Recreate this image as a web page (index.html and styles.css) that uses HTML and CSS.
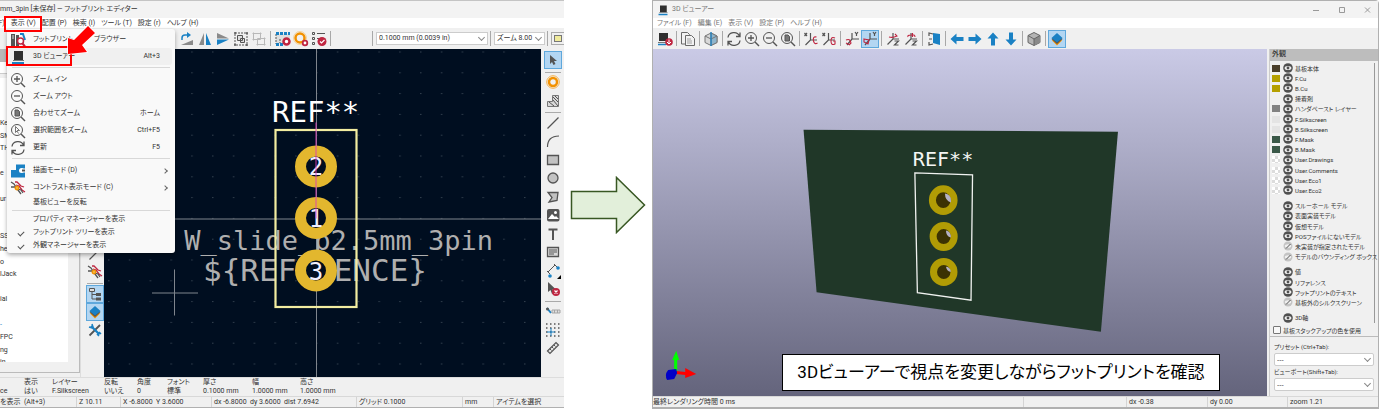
FILE: index.html
```html
<!DOCTYPE html>
<html lang="ja">
<head>
<meta charset="utf-8">
<title>フットプリント エディター / 3D ビューアー</title>
<link rel="stylesheet" href="styles.css">
</head>
<body>
<svg class="defs" aria-hidden="true">
  <defs>
    <symbol id="chip" viewBox="0 0 16 16"><path d="M4 2h9v9H4z" fill="#2f2f2f"/><path d="M3 11h11v1H3z" fill="#777"/><path d="M2 13h12v2H2z" fill="#1a81c4"/></symbol>
    <symbol id="library" viewBox="0 0 16 16"><path d="M1 2h4v12H1zM6 3h3v11H6z" fill="#545454"/><path d="M2 4h2M2 6h2" stroke="#ddd"/><path d="M10 2l3 0 2 6" fill="none" stroke="#1a81c4" stroke-width="2"/><circle cx="10.500" cy="9" r="3" fill="#fff" stroke="#bf2641" stroke-width="1.500"/><path d="M12.500 11.500l2.500 3" stroke="#bf2641" stroke-width="2"/></symbol>
    <symbol id="zoomin" viewBox="0 0 16 16" fill="none" stroke="#545454"><circle cx="7" cy="7" r="5.500"/><path d="M11 11l4 4" stroke-width="1.500"/><path d="M4 7h6M7 4v6" stroke-width="1.300"/></symbol>
    <symbol id="zoomout" viewBox="0 0 16 16" fill="none" stroke="#545454"><circle cx="7" cy="7" r="5.500"/><path d="M11 11l4 4" stroke-width="1.500"/><path d="M4 7h6" stroke-width="1.300"/></symbol>
    <symbol id="zoomfit" viewBox="0 0 16 16" fill="none" stroke="#545454"><circle cx="7" cy="7" r="5.500"/><path d="M11 11l4 4" stroke-width="1.500"/><path d="M5 4h3l1.500 1.500V10H5z" fill="#777"/></symbol>
    <symbol id="zoomsel" viewBox="0 0 16 16" fill="none" stroke="#545454"><circle cx="7" cy="7" r="5.500"/><path d="M11 11l4 4" stroke-width="1.500"/><path d="M5.500 3.500v6l1.500-1.500 1.500 2.500M5.500 3.500l4 4H7" stroke-width=".8"/></symbol>
    <symbol id="refresh" viewBox="0 0 16 16" fill="none" stroke="#545454" stroke-width="1.300"><path d="M2 6.500A6 5.500 0 0 1 13.500 5M14 9.500A6 5.500 0 0 1 2.500 11M14 1.500V5.500H10M2 14.500v-4h4"/></symbol>
    <symbol id="drawmode" viewBox="0 0 16 16"><path d="M6 1.500h9v4h-3a2 2 0 0 0 0 4h3v5H1V7h5z" fill="#1a81c4"/><circle cx="11.500" cy="7.500" r="2.500" fill="#fff"/><path d="M12 7.500h3" stroke="#545454" stroke-width="2"/></symbol>
    <symbol id="contrast" viewBox="0 0 16 16" fill="none" stroke-width="1.300"><path d="M5 2h2l4 4 3 1M6 5l3 1 3 4 3 2" stroke="#bf2641"/><path d="M1 2l3 2 2 3M1 7h4l3 3 3 4M8 9l3 1 2 3" stroke="#545454"/><circle cx="7" cy="8" r="1.800" fill="#f2b844" stroke="#f29100"/></symbol>
    <symbol id="rotate" viewBox="0 0 16 16"><path d="M2 14h12V9z" fill="#8a8a8a"/><path d="M3 9V7q0-3 3-3h4" fill="none" stroke="#1a81c4" stroke-width="1.500"/><path d="M8 1l4 3-4 3z" fill="#1a81c4"/></symbol>
    <symbol id="mirrorh" viewBox="0 0 16 16"><path d="M7 2v12H2z" fill="#8a8a8a"/><path d="M9 2v12h5z" fill="#1a81c4"/></symbol>
    <symbol id="mirrorv" viewBox="0 0 16 16"><path d="M2 2v5.500h12z" fill="#8a8a8a"/><path d="M2 14V8.500h12z" fill="#1a81c4"/></symbol>
    <symbol id="group" viewBox="0 0 16 16" fill="none" stroke="#545454"><path d="M2 2h12v12H2z" stroke-dasharray="2 1"/><path d="M1.500 1.500h1v1h-1zM13.500 1.500h1v1h-1zM1.500 13.500h1v1h-1zM13.500 13.500h1v1h-1z"/><path d="M4.500 4.500h5v5h-5zM7.500 7.500h4v4h-4z" fill="#ddd"/></symbol>
    <symbol id="ungroup" viewBox="0 0 16 16" fill="none" stroke="#b8b8b8"><path d="M2.500 2.500h7v6h-7zM6.500 7.500h7v6h-7z"/><path d="M2 2h1v1H2zM9 2h1v1H9zM2 8h1v1H2zM13 13h1v1h-1zM6 13h1v1H6zM13 7h1v1h-1z"/></symbol>
    <symbol id="fpprops" viewBox="0 0 16 16"><path d="M1 3h14v10H1z" fill="#dedede"/><path d="M1 3v10M5 8v4" stroke="#545454" stroke-dasharray="2 1"/><path d="M1 1h3v3H1zM5 1h3v3H5zM9 1h3v3H9zM13 1h2v3h-2zM1 12h3v3H1zM5 12h3v3H5z" fill="#1a81c4"/><circle cx="11.500" cy="10.500" r="3" fill="#fff" stroke="#bf2641" stroke-width="2.500"/></symbol>
    <symbol id="padprops" viewBox="0 0 16 16" fill="none"><circle cx="7" cy="7" r="4.500" stroke="#f29100" stroke-width="2.500"/><circle cx="7" cy="7" r="6.500" stroke="#f5c77c" stroke-width=".7"/><circle cx="12" cy="12" r="2.300" fill="#fff" stroke="#bf2641" stroke-width="1.800"/></symbol>
    <symbol id="check" viewBox="0 0 16 16"><path d="M1.500 1.500h2v2h-2zM1.500 6.500h2v2h-2zM1.500 11.500h2v2h-2z" fill="none" stroke="#545454"/><path d="M6 2.500h8M6 7.500h4" stroke="#545454"/><circle cx="11" cy="10.500" r="4.500" fill="#bf2641"/><path d="M9 10.500l1.500 1.500 3-3" fill="none" stroke="#fff" stroke-width="1.200"/></symbol>
    <symbol id="cursor" viewBox="0 0 16 16"><path d="M5 3v9l2-2L8.500 13l2-1-1.500-3H12z" fill="#545454"/></symbol>
    <symbol id="pad" viewBox="0 0 16 16" fill="none"><circle cx="8" cy="8" r="4" stroke="#f29100" stroke-width="2.500"/><circle cx="8" cy="8" r="6.300" stroke="#f5b04a"/></symbol>
    <symbol id="rule" viewBox="0 0 16 16"><path d="M7.500 2.500h6v11h-11v-5h5z" fill="#d8d8d8" stroke="#777"/><path d="M8 4l5 5M8 7l5 6M4 9l5 4M10 3l3 3" stroke="#545454"/></symbol>
    <symbol id="line" viewBox="0 0 16 16"><path d="M2.500 13.500l11-11" stroke="#545454" stroke-width="1.200"/></symbol>
    <symbol id="arc" viewBox="0 0 16 16"><path d="M2.500 14Q2.500 3 14 3" fill="none" stroke="#545454" stroke-width="1.200"/></symbol>
    <symbol id="rect" viewBox="0 0 16 16"><path d="M2.500 3.500h11v9h-11z" fill="#c2c2c2" stroke="#545454" stroke-width="1.300"/></symbol>
    <symbol id="circle" viewBox="0 0 16 16"><circle cx="8" cy="8" r="5" fill="#c2c2c2" stroke="#545454" stroke-width="1.300"/></symbol>
    <symbol id="poly" viewBox="0 0 16 16"><path d="M3 3.500h10l-1 8L4 13l3-4.500z" fill="#c2c2c2" stroke="#545454" stroke-width="1.300"/></symbol>
    <symbol id="image" viewBox="0 0 16 16"><rect x="2" y="2" width="12.500" height="12.500" rx="2" fill="#545454"/><circle cx="10.500" cy="5.500" r="1.500" fill="#fff"/><path d="M3 12l4-5 3 3 1-1 3 3z" fill="#fff"/></symbol>
    <symbol id="textt" viewBox="0 0 16 16"><path d="M3.500 3.500h9M8 3v11" stroke="#545454" stroke-width="2"/></symbol>
    <symbol id="textbox" viewBox="0 0 16 16"><path d="M2.500 3.500h11v9h-11z" fill="#d8d8d8" stroke="#545454" stroke-width="1.300"/><path d="M4 6h8M4 8h8M4 10h5" stroke="#545454"/></symbol>
    <symbol id="dimension" viewBox="0 0 16 16"><path d="M3 9l7-7M2 8l3 3M9 1l3 3" stroke="#545454"/><circle cx="13" cy="5" r="1.800" fill="#1a81c4"/><circle cx="5" cy="13" r="1.800" fill="#1a81c4"/><path d="M16 12v4h-4z" fill="#000"/></symbol>
    <symbol id="delete" viewBox="0 0 16 16"><path d="M3 1v10l2.500-2 1.500 4 2-1-1.500-3.500H11z" fill="#545454"/><circle cx="11" cy="11" r="4" fill="#bf2641"/><path d="M9.500 9.500l3 3M12.500 9.500l-3 3" stroke="#fff" stroke-width="1.200"/></symbol>
    <symbol id="anchor" viewBox="0 0 16 16"><path d="M2 5l4 5" stroke="#1a81c4" stroke-width="2"/><circle cx="2.500" cy="6" r="1.500" fill="#545454"/><path d="M7 7h8v3H7z" fill="#e0e0e0" stroke="#a5a5a5"/><path d="M9.500 7v3M12.500 7v3" stroke="#a5a5a5"/></symbol>
    <symbol id="griddots" viewBox="0 0 16 16"><path d="M1 2h15M1 6h15M1 10h15M1 14h15" stroke="#545454" stroke-width="1.500" stroke-dasharray="1.500 2.500"/><path d="M6 6v8M2 10h8" stroke="#1a81c4"/></symbol>
    <symbol id="measure" viewBox="0 0 16 16"><path d="M2.500 11L11 2.500l2.500 2.500L5 13.500z" fill="#e8e8e8" stroke="#545454" stroke-width="1.200"/><path d="M5 9l1.500 1.500M7 7l1.500 1.500M9 5l1.500 1.500" stroke="#545454"/></symbol>
    <symbol id="tree" viewBox="0 0 16 16"><path d="M2.500 2.500h5v3h-5z" fill="#ddd" stroke="#545454"/><path d="M5 5v8h5M5 8.500h5" fill="none" stroke="#545454"/><path d="M9 7h5v3H9zM9 11.500h5v3H9z" fill="#545454"/></symbol>
    <symbol id="layers" viewBox="0 0 16 16"><path d="M8 5l5 4.500L8 14.500 3 9.500z" fill="#f29100"/><path d="M8 3l5.500 5L8 13 2.500 8z" fill="#545454"/><path d="M8 2l5.500 5L8 11.500 2.500 7z" fill="#1a81c4"/></symbol>
    <symbol id="tools" viewBox="0 0 16 16"><path d="M2.500 13.500L13 3" stroke="#545454" stroke-width="1.800"/><path d="M4 4l8.500 8.500" stroke="#1a81c4" stroke-width="2.300"/><path d="M2 5l3 1 1-1-1-3M14 12l-1.500-1.500-2 2L12 14" fill="none" stroke="#1a81c4" stroke-width="1.500"/></symbol>
    <symbol id="export" viewBox="0 0 16 16"><path d="M2 2h9v8H2z" fill="#2f2f2f"/><path d="M1 11.500h10" stroke="#777"/><path d="M1 13.500h8" stroke="#1a81c4" stroke-width="1.500"/><circle cx="12" cy="11" r="3.800" fill="#bf2641"/><path d="M12 8.500v4M10 11l2 2 2-2" fill="none" stroke="#fff"/></symbol>
    <symbol id="copy" viewBox="0 0 16 16" fill="#f2f2f2" stroke="#6a6a6a"><path d="M1.500 1.500h6l2 2V13h-8z"/><path d="M5.500 4.500h6l3 3V14.500h-9z"/><path d="M7 8h4M7 10h5M7 12h5" stroke="#a0a0a0"/></symbol>
    <symbol id="cubehalf" viewBox="0 0 16 16"><path d="M8 2l6 3v6.500L8 14.500l-6-3V5z" fill="#d8d8d8" stroke="#777"/><path d="M8 2v12.500l6-3V5z" fill="#8fb5cc" stroke="#777"/><path d="M2 5l6 3 6-3" fill="none" stroke="#777"/><path d="M8 1v14" stroke="#1a81c4" stroke-width="1.300"/></symbol>
    <symbol id="cube" viewBox="0 0 16 16"><path d="M8 1.500l6 3v7l-6 3-6-3v-7z" fill="#b5b5b5" stroke="#666"/><path d="M8 8l6-3.500v7l-6 3z" fill="#8a8a8a"/><path d="M2 4.500L8 8l6-3.500M8 8v6.500" fill="none" stroke="#666"/></symbol>
    <symbol id="rotx1" viewBox="0 0 16 16" fill="none" stroke="#545454"><path d="M1.500 2l2.500 3M4 2L1.500 5M7.500 2v7l-5 5M7.500 9H14" stroke-width="1.200"/><path d="M13.500 6q-4-1-3 4 1 4 4 2" stroke="#bf2641" stroke-width="1.100"/></symbol>
    <symbol id="rotx2" viewBox="0 0 16 16" fill="none" stroke="#545454"><path d="M1.500 2l2.500 3M4 2L1.500 5M7.500 2v7l-5 5M7.500 9H14" stroke-width="1.200"/><path d="M14 7q-4-2-4 3t4 3v-3h-2" stroke="#bf2641" stroke-width="1.100"/></symbol>
    <symbol id="roty1" viewBox="0 0 16 16" fill="none" stroke="#545454"><path d="M11 1l1.500 2L14 1M12.500 3v2M8 2v6h7M8 8l-5 6" stroke-width="1.200"/><path d="M2 9q4-2 5 3l-2 2M2 12l4 2" stroke="#bf2641" stroke-width="1.100"/></symbol>
    <symbol id="roty2" viewBox="0 0 16 16" fill="none" stroke="#545454"><path d="M11 1l1.500 2L14 1M12.500 3v2M8 2v6h7M8 8l-5 6" stroke-width="1.200"/><path d="M2 8l5 1-1 4-4-2z" stroke="#bf2641" stroke-width="1.100"/></symbol>
    <symbol id="rotz1" viewBox="0 0 16 16" fill="none" stroke="#545454"><path d="M8 2v6l-5.500 5.500M8 8h6M9.500 10h4l-4 4h4" stroke-width="1.200"/><path d="M4 6q4 1 8-1l-2-2" stroke="#bf2641" stroke-width="1.100"/></symbol>
    <symbol id="rotz2" viewBox="0 0 16 16" fill="none" stroke="#545454"><path d="M8 2v6l-5.500 5.500M8 8h6M9.500 10h4l-4 4h4" stroke-width="1.200"/><path d="M12 6q0-3-4-2-4 0-3 2M9.500 2v4" stroke="#bf2641" stroke-width="1.100"/></symbol>
    <symbol id="flip" viewBox="0 0 16 16"><path d="M7 2l7 1v11l-7-2z" fill="#1a81c4"/><path d="M7 3L3 2v3M3 8h3M3 11v3l4-1" fill="none" stroke="#545454" stroke-width="1.200"/></symbol>
    <symbol id="arrow" viewBox="0 0 16 16"><path d="M1.500 8l6-5.500v3.500h7v4h-7v3.500z" fill="#1a81c4"/></symbol>
    <symbol id="eye" viewBox="0 0 10 10"><circle cx="5" cy="5" r="4.800" fill="#505050"/><ellipse cx="5" cy="5" rx="3.400" ry="2" fill="#f0f0f0"/><circle cx="5" cy="5" r="1.400" fill="#505050"/></symbol>
    <symbol id="noeye" viewBox="0 0 10 10"><circle cx="5" cy="5" r="4.500" fill="#c4c4c4"/><ellipse cx="5" cy="5" rx="3.200" ry="1.800" fill="#f0f0f0"/><path d="M3 7.500L7.500 3" stroke="#505050"/></symbol>
  </defs>
</svg>

<main class="page">
  <section class="window editor">
    <header class="titlebar">mm_3pin [未保存] — フットプリント エディター</header>
    <nav class="menubar editor-menus">
      <button>(F)</button><button>表示 (V)</button><button>配置 (P)</button><button>検索 (I)</button><button>ツール (T)</button><button>設定 (r)</button><button>ヘルプ (H)</button>
    </nav>
    <div class="toolbar editor-tools">
      <button class="tool" aria-label="回転"><svg><use href="#rotate"/></svg></button>
      <button class="tool" aria-label="左右反転"><svg><use href="#mirrorh"/></svg></button>
      <button class="tool" aria-label="上下反転"><svg><use href="#mirrorv"/></svg></button>
      <button class="tool" aria-label="グループ化"><svg><use href="#group"/></svg></button>
      <button class="tool" aria-label="グループ解除"><svg><use href="#ungroup"/></svg></button>
      <i class="sep"></i>
      <button class="tool" aria-label="フットプリントのプロパティ"><svg><use href="#fpprops"/></svg></button>
      <button class="tool" aria-label="パッドのプロパティ"><svg><use href="#padprops"/></svg></button>
      <button class="tool" aria-label="チェッカー"><svg><use href="#check"/></svg></button>
      <i class="sep"></i>
      <span class="spacer"></span>
      <i class="sep"></i>
      <span class="combo grid-combo"><select aria-label="グリッド"><option>0.1000 mm (0.0039 in)</option></select></span>
      <i class="sep"></i>
      <span class="combo zoom-combo"><select aria-label="ズーム"><option>ズーム 8.00</option></select></span>
      <i class="sep"></i>
      <button class="layer-color" aria-label="レイヤー"><i></i></button>
    </div>

    <div class="workspace">
      <aside class="tree-panel">
        <div class="tree-head"></div>
        <div class="tree-search"></div>
        <div class="tree-list">
          <ul>
            <li>Key</li><li>SM</li><li>TH</li><li></li><li>e</li><li></li><li>ur</li><li></li><li></li><li>SS</li><li>he</li><li>o</li><li>lJack</li><li></li><li>ial</li><li></li><li class="link">-</li><li>FPC</li><li>ng</li><li>in</li>
          </ul>
        </div>
      </aside>
      <div class="side-tools left-tools">
        <button class="tool" aria-label="図形"><svg><use href="#line"/></svg></button>
        <button class="tool" aria-label="コントラスト"><svg><use href="#contrast"/></svg></button>
        <i class="rule"></i>
        <button class="tool on" aria-label="ツリー"><svg><use href="#tree"/></svg></button>
        <button class="tool on" aria-label="外観"><svg><use href="#layers"/></svg></button>
        <button class="tool" aria-label="ツール"><svg><use href="#tools"/></svg></button>
      </div>
      <svg class="canvas" viewBox="0 0 437 329" preserveAspectRatio="xMidYMid slice">
        <defs><pattern id="dots" x="4" y="3" width="20.800" height="20.800" patternUnits="userSpaceOnUse"><path d="M0 .5h1.500" stroke="#34414f"/></pattern></defs>
        <rect width="437" height="329" fill="#000e20"/>
        <rect width="437" height="329" fill="url(#dots)"/>
        <path d="M212.500 0v329M0 170.500h437" stroke="#7f858d"/>
        <path d="M70.500 221v46M48 244.500h46" stroke="#7f858d"/>
        <g class="mono" fill="#afafaf">
          <text x="389" y="201" font-size="27" text-anchor="end">W_slide_p2.5mm_3pin</text>
          <text x="99" y="232" font-size="31">${REFERENCE}</text>
        </g>
        <g fill="#000e20" stroke="#e3b72e" stroke-width="11">
          <circle cx="212" cy="118" r="15.500"/><circle cx="212" cy="169.500" r="15.500"/><circle cx="212" cy="222" r="15.500"/>
        </g>
        <rect x="171.500" y="81.500" width="81" height="177" fill="none" stroke="#f2eda1" stroke-width="2.200"/>
        <text class="mono" x="168" y="73" font-size="29" fill="#fff">REF**</text>
        <g class="mono" fill="#f0f0ff" font-size="24" text-anchor="middle">
          <text x="212" y="126">2</text><text x="212" y="178">1</text><text x="212" y="231">3</text>
        </g>
        <path d="M212 74v96" stroke="#e040b8" stroke-width="1.500" opacity=".6"/>
      </svg>
      <div class="side-tools right-tools">
        <button class="tool on" aria-label="選択"><svg><use href="#cursor"/></svg></button>
        <i class="rule"></i>
        <button class="tool" aria-label="パッド"><svg><use href="#pad"/></svg></button>
        <button class="tool" aria-label="ルールエリア"><svg><use href="#rule"/></svg></button>
        <i class="rule"></i>
        <button class="tool" aria-label="線"><svg><use href="#line"/></svg></button>
        <button class="tool" aria-label="円弧"><svg><use href="#arc"/></svg></button>
        <button class="tool" aria-label="矩形"><svg><use href="#rect"/></svg></button>
        <button class="tool" aria-label="円"><svg><use href="#circle"/></svg></button>
        <button class="tool" aria-label="ポリゴン"><svg><use href="#poly"/></svg></button>
        <button class="tool" aria-label="画像"><svg><use href="#image"/></svg></button>
        <button class="tool" aria-label="テキスト"><svg><use href="#textt"/></svg></button>
        <button class="tool" aria-label="テキストボックス"><svg><use href="#textbox"/></svg></button>
        <button class="tool" aria-label="寸法線"><svg><use href="#dimension"/></svg></button>
        <button class="tool" aria-label="削除"><svg><use href="#delete"/></svg></button>
        <i class="rule"></i>
        <button class="tool" aria-label="アンカー"><svg><use href="#anchor"/></svg></button>
        <button class="tool" aria-label="グリッド原点"><svg><use href="#griddots"/></svg></button>
        <button class="tool" aria-label="計測"><svg><use href="#measure"/></svg></button>
      </div>
    </div>

    <dl class="info">
      <div><dt>&nbsp;</dt><dd>ce</dd></div>
      <div><dt>表示</dt><dd>はい</dd></div>
      <div><dt>レイヤー</dt><dd>F.Silkscreen</dd></div>
      <div><dt>反転</dt><dd>いいえ</dd></div>
      <div><dt>角度</dt><dd>0</dd></div>
      <div><dt>フォント</dt><dd>標準</dd></div>
      <div><dt>厚さ</dt><dd>0.1000 mm</dd></div>
      <div><dt>幅</dt><dd>1.0000 mm</dd></div>
      <div><dt>高さ</dt><dd>1.0000 mm</dd></div>
    </dl>
    <footer class="status editor-status">
      <span>を表示&nbsp; (Alt+3)</span><span>Z 10.11</span><span>X -6.8000&nbsp; Y 3.6000</span><span>dx -6.8000&nbsp; dy 3.6000&nbsp; dist 7.6942</span><span>グリッド 0.1000</span><span>mm</span><span>アイテムを選択</span>
    </footer>

    <div class="menu" role="menu">
      <button class="item browser"><svg><use href="#library"/></svg><span>フットプリント</span><span>ブラウザー</span></button>
      <button class="item hover"><svg><use href="#chip"/></svg><span>3D ビューアー</span><kbd>Alt+3</kbd></button>
      <hr>
      <button class="item"><svg><use href="#zoomin"/></svg><span>ズーム イン</span></button>
      <button class="item"><svg><use href="#zoomout"/></svg><span>ズーム アウト</span></button>
      <button class="item"><svg><use href="#zoomfit"/></svg><span>合わせてズーム</span><kbd>ホーム</kbd></button>
      <button class="item"><svg><use href="#zoomsel"/></svg><span>選択範囲をズーム</span><kbd>Ctrl+F5</kbd></button>
      <button class="item"><svg><use href="#refresh"/></svg><span>更新</span><kbd>F5</kbd></button>
      <hr>
      <button class="item"><svg><use href="#drawmode"/></svg><span>描画モード (D)</span><b class="chev"></b></button>
      <button class="item"><svg><use href="#contrast"/></svg><span>コントラスト表示モード (C)</span><b class="chev"></b></button>
      <button class="item short"><i class="mark"></i><span>基板ビューを反転</span></button>
      <hr class="tight">
      <button class="item short"><i class="mark"></i><span>プロパティ マネージャーを表示</span></button>
      <button class="item short"><i class="mark ticked"></i><span>フットプリント ツリーを表示</span></button>
      <button class="item short"><i class="mark ticked"></i><span>外観マネージャーを表示</span></button>
    </div>
    <div class="callout callout-menu"></div>
    <div class="callout callout-item"></div>
    <svg class="pointer" viewBox="0 0 32 32"><path d="M22 1L29 8 16 20 21 27 2 29 2 13 8 15z" fill="#f00" stroke="#fff" stroke-width="1.500" paint-order="stroke"/></svg>
  </section>

  <div class="between">
    <svg viewBox="0 0 76 58"><path d="M1.500 15.500h45V1.500L74.500 29 46.500 56.500V42.500h-45z" fill="#e2efda" stroke="#385723" stroke-width="1.500"/></svg>
  </div>

  <section class="window viewer">
    <header class="titlebar viewer-title"><svg><use href="#chip"/></svg><span>3D ビューアー</span>
      <svg class="controls" viewBox="0 0 60 10" fill="none" stroke="#999"><path d="M1 5.500h6M27.500 2.500h5v5h-5zM53 2.500l5 5M58 2.500l-5 5"/></svg>
    </header>
    <nav class="menubar viewer-menus"><button>ファイル (F)</button><button>編集 (E)</button><button>表示 (V)</button><button>設定 (P)</button><button>ヘルプ (H)</button></nav>
    <div class="toolbar viewer-tools">
      <button class="tool" aria-label="再読込"><svg><use href="#export"/></svg></button><i class="sep"></i>
      <button class="tool" aria-label="コピー"><svg><use href="#copy"/></svg></button><i class="sep"></i>
      <button class="tool" aria-label="レイトレーシング"><svg><use href="#cubehalf"/></svg></button><i class="sep"></i>
      <button class="tool" aria-label="更新"><svg><use href="#refresh"/></svg></button>
      <button class="tool" aria-label="ズームイン"><svg><use href="#zoomin"/></svg></button>
      <button class="tool" aria-label="ズームアウト"><svg><use href="#zoomout"/></svg></button>
      <button class="tool" aria-label="合わせてズーム"><svg><use href="#zoomfit"/></svg></button><i class="sep"></i>
      <button class="tool" aria-label="X回転"><svg><use href="#rotx1"/></svg></button>
      <button class="tool" aria-label="X逆回転"><svg><use href="#rotx2"/></svg></button><i class="sep"></i>
      <button class="tool" aria-label="Y回転"><svg><use href="#roty1"/></svg></button>
      <button class="tool on" aria-label="Y逆回転"><svg><use href="#roty2"/></svg></button><i class="sep"></i>
      <button class="tool" aria-label="Z回転"><svg><use href="#rotz1"/></svg></button>
      <button class="tool" aria-label="Z逆回転"><svg><use href="#rotz2"/></svg></button><i class="sep"></i>
      <button class="tool" aria-label="反転"><svg><use href="#flip"/></svg></button><i class="sep"></i>
      <button class="tool" aria-label="左"><svg><use href="#arrow"/></svg></button>
      <button class="tool right" aria-label="右"><svg><use href="#arrow"/></svg></button>
      <button class="tool up" aria-label="上"><svg><use href="#arrow"/></svg></button>
      <button class="tool down" aria-label="下"><svg><use href="#arrow"/></svg></button><i class="sep"></i>
      <button class="tool" aria-label="投影"><svg><use href="#cube"/></svg></button><i class="sep"></i>
      <button class="tool on" aria-label="外観"><svg><use href="#layers"/></svg></button>
    </div>
    <div class="workspace">
      <div class="stage">
        <svg class="scene" viewBox="0 0 614 346" preserveAspectRatio="xMidYMid slice">
          <path d="M151 80.500L464.500 82.500 447.500 282 164 242.500z" fill="#203728"/>
          <path d="M262 123.500L319.500 125.500 318 250.500 264.500 243z" fill="none" stroke="#f0f2f0" stroke-width="1.300"/>
          <text class="mono" x="260" y="117" font-size="20" fill="#f4f6f4">REF**</text>
          <g fill="#3b3203" stroke="#b19c05" stroke-width="7">
            <ellipse cx="290.300" cy="150.700" rx="10.800" ry="11.300"/><ellipse cx="290.700" cy="187" rx="10.500" ry="11"/><ellipse cx="290.800" cy="222.300" rx="10.200" ry="10.500"/>
          </g>
          <path d="M292 144q6 1 6 7v2q-6-2-6-9zM293 181q5 1 5 7-5-1-5-7zM293 217q4 0 5 5-4 0-5-5z" fill="#b4b0c4"/>
          <path d="M22 324v-14h-2l4-9 3 9h-2v14z" fill="#0f0"/>
          <path d="M24 321l9 1v-4l11 6-11 4v-3l-9-1z" fill="#f00"/>
          <path d="M16 320l8-1 1 4-3 6-7 1q-3-5 1-10z" fill="#0000c8"/>
        </svg>
        <p class="caption">3Dビューアーで視点を変更しながらフットプリントを確認</p>
      </div>
      <aside class="appearance">
        <h2>外観</h2>
        <ul class="layers">
          <li><i class="sw brown"></i><svg><use href="#eye"/></svg>基板本体</li>
          <li><i class="sw copper"></i><svg><use href="#eye"/></svg>F.Cu</li>
          <li><i class="sw copper"></i><svg><use href="#eye"/></svg>B.Cu</li>
          <li><i class="sw"></i><svg><use href="#eye"/></svg>接着剤</li>
          <li><i class="sw paste"></i><svg><use href="#eye"/></svg>ハンダペースト レイヤー</li>
          <li><i class="sw silk"></i><svg><use href="#eye"/></svg>F.Silkscreen</li>
          <li><i class="sw silk"></i><svg><use href="#eye"/></svg>B.Silkscreen</li>
          <li><i class="sw mask"></i><svg><use href="#eye"/></svg>F.Mask</li>
          <li><i class="sw mask"></i><svg><use href="#eye"/></svg>B.Mask</li>
          <li><i class="sw clear"></i><svg><use href="#eye"/></svg>User.Drawings</li>
          <li><i class="sw clear"></i><svg><use href="#eye"/></svg>User.Comments</li>
          <li><i class="sw clear"></i><svg><use href="#eye"/></svg>User.Eco1</li>
          <li><i class="sw clear"></i><svg><use href="#eye"/></svg>User.Eco2</li>
          <li class="first"><i class="sw"></i><svg><use href="#eye"/></svg>スルーホール モデル</li>
          <li><i class="sw"></i><svg><use href="#eye"/></svg>表面実装モデル</li>
          <li><i class="sw"></i><svg><use href="#eye"/></svg>仮想モデル</li>
          <li><i class="sw"></i><svg><use href="#eye"/></svg>POSファイルにないモデル</li>
          <li><i class="sw"></i><svg><use href="#noeye"/></svg>未実装が指定されたモデル</li>
          <li><i class="sw"></i><svg><use href="#noeye"/></svg>モデルのバウンディング ボックス</li>
          <li class="first"><i class="sw"></i><svg><use href="#eye"/></svg>値</li>
          <li><i class="sw"></i><svg><use href="#eye"/></svg>リファレンス</li>
          <li><i class="sw"></i><svg><use href="#eye"/></svg>フットプリントのテキスト</li>
          <li><i class="sw"></i><svg><use href="#noeye"/></svg>基板外のシルクスクリーン</li>
          <li class="first"><i class="sw"></i><svg><use href="#eye"/></svg>3D軸</li>
        </ul>
        <label class="stackup"><input type="checkbox">基板スタックアップの色を使用</label>
        <div class="presets">
          <label for="preset">プリセット (Ctrl+Tab):</label>
          <span class="combo"><select id="preset"><option>---</option></select></span>
          <label for="viewport">ビューポート(Shift+Tab):</label>
          <span class="combo"><select id="viewport"><option>---</option></select></span>
        </div>
      </aside>
    </div>
    <footer class="status viewer-status"><span>最終レンダリング時間 0 ms</span><span></span><span>dx -0.38</span><span>dy 0.00</span><span>zoom 1.21</span></footer>
  </section>
</main>
</body>
</html>
```
FILE: styles.css
```css
* { box-sizing: border-box; }

body {
  margin: 0;
  background: #fff;
  color: #333;
  font-family: Roboto, "Noto Sans CJK JP", sans-serif;
  font-size: 7px;
  line-height: 9px;
  font-feature-settings: "palt";
  overflow: hidden;
}

button, select, kbd {
  font: inherit;
  font-feature-settings: inherit;
  color: inherit;
  padding: 0;
  border: 0;
  background: none;
}

ul, dl, dd, h2, p { margin: 0; padding: 0; }
ul { list-style: none; }
.defs { position: absolute; width: 0; height: 0; }
.mono { font-family: "DejaVu Sans Mono", monospace; }

.page {
  display: grid;
  grid-template-columns: 564fr 88fr 727fr;
  height: 100vh;
  min-height: 400px;
}

.window {
  position: relative;
  display: flex;
  flex-direction: column;
  min-width: 0;
  background: #f0f0f0;
  border-top: 1px solid #c4c4c4;
  white-space: nowrap;
}
.editor { margin-bottom: 1px; border-bottom: 1px solid #b0b0b0; overflow: hidden; }
.viewer { border: 1px solid #b0b0b0; border-bottom-width: 2px; border-radius: 0 4px 0 0; }
.between { display: flex; align-items: center; justify-content: center; }
.between svg { width: 76px; height: 58px; }

.titlebar { flex: none; height: 17px; line-height: 17px; background: #f3f3f3; }
.viewer-title { display: flex; align-items: center; gap: 3px; padding: 0 6px 0 4px; color: #777; }
.viewer-title svg { width: 12px; height: 12px; }
.viewer-title .controls { width: 60px; margin-left: auto; }

.menubar { flex: none; display: flex; height: 10px; background: #fff; line-height: 10px; }
.editor-menus { gap: 6px; margin-left: -4px; }
.viewer-menus { gap: 6px; padding-left: 4px; color: #777; }

.toolbar { flex: none; display: flex; align-items: center; height: 21px; }
.editor-tools { padding-left: 178px; }
.viewer-tools { padding-left: 3px; }
.tool {
  flex: none;
  display: flex;
  align-items: center;
  justify-content: center;
  width: 18px;
  height: 18px;
}
.tool svg { flex: none; width: 16px; height: 16px; }
.tool.on { background: #b3d6f2; border: 1px solid #5fa8dc; }
.tool.right svg { transform: rotate(180deg); }
.tool.up svg { transform: rotate(90deg); }
.tool.down svg { transform: rotate(-90deg); }
.sep { flex: none; width: 1px; height: 15px; margin: 0 2px; background: #a8a8a8; }
.editor-tools .sep { margin: 0 3px 0 2px; }
.spacer { flex: 1; }

.combo { position: relative; display: flex; height: 13px; background: #fff; border: 1px solid #ccc; }
.combo select { appearance: none; width: 100%; padding: 0 2px; outline: none; }
.combo::after, .chev {
  content: "";
  width: 4px;
  height: 4px;
  border: solid #666;
  border-width: 0 1px 1px 0;
  transform: rotate(45deg);
}
.combo::after { position: absolute; right: 3px; top: 2px; pointer-events: none; border-color: #888; }
.grid-combo { width: 112px; }
.zoom-combo { width: 51px; }
.layer-color { width: 13px; height: 13px; padding: 2px; border: 1px solid #aaa; border-right: 0; }
.layer-color i { display: block; height: 7px; background: #f0eb9c; border: 1px solid #777; }

.workspace { flex: 1; display: flex; min-height: 0; }

.tree-panel { flex: none; display: flex; flex-direction: column; width: 80px; margin-bottom: 4px; border-right: 1px solid #bbb; border-bottom: 1px solid #bbb; }
.tree-head { flex: none; height: 13px; background: #b8b8b8; }
.tree-search { flex: none; height: 12px; background: #fff; border-bottom: 1px solid #ccc; }
.tree-list { flex: 1; min-height: 0; margin: 4px 11px 10px 0; padding-top: 39px; background: #fff; overflow: hidden; }
.tree-list ul { display: grid; grid-auto-rows: 1fr; height: calc(100% + 7px); }
.tree-list li { line-height: 12px; height: 12px; }
.tree-list .link { color: #1a81c4; }

.side-tools { flex: none; display: flex; flex-direction: column; align-items: center; width: 22px; }
.left-tools { width: 24px; padding: 196px 0 0 4px; border-left: 1px solid #ddd; }
.right-tools { width: 23px; padding: 2px 0 20px; justify-content: space-between; }
.rule { flex: none; width: 16px; height: 3px; border-bottom: 1px solid #aaa; }
.left-tools .rule { margin-bottom: 1px; }
.canvas { flex: 1; min-width: 0; width: 100%; height: 100%; }

.info { flex: none; display: grid; grid-template-columns: 24fr 28fr 52fr 33fr 30fr 36fr 49fr 48fr 264fr; height: 19px; border-top: 1px solid #ddd; }
.info div { min-width: 0; }

.status { flex: none; display: grid; height: 11px; line-height: 10px; border-top: 1px solid #d8d8d8; }
.status span { min-width: 0; padding-left: 2px; border-left: 1px solid #d4d4d4; }
.status span:first-child { border-left: 0; padding-left: 0; }
.editor-status { grid-template-columns: 76fr 44fr 91fr 145fr 106fr 31fr 71fr; }
.viewer-status { grid-template-columns: 370fr 103fr 81fr 80fr 91fr; }

.menu {
  position: absolute;
  left: 7px;
  top: 28px;
  width: 168px;
  padding: 2px 0 1px;
  display: flex;
  flex-direction: column;
  background: #f9f9f9;
  border-radius: 3px;
  box-shadow: 0 2px 4px #0005;
}
.item { display: flex; align-items: center; height: 17px; padding: 0 8px 0 3px; text-align: left; border-radius: 3px; }
.item.short { height: 13px; }
.item.hover { margin: 0 3px 0 1px; padding: 0 5px 0 2px; background: #f0f0f0; }
.item.browser span:nth-of-type(1) { width: 61px; }
.item svg { flex: none; width: 16px; height: 16px; margin-right: 7px; }
.item kbd { margin-left: auto; margin-right: 7px; }
.chev { margin-left: auto; transform: rotate(-45deg); }
.mark { width: 16px; height: 8px; margin-right: 7px; }
.mark.ticked::before { content: ""; display: block; width: 5px; height: 3px; margin: 2px 0 0 8px; border: solid #555; border-width: 0 0 1px 1px; transform: rotate(-45deg); }
.menu hr { width: 158px; height: 1px; margin: 2px auto 3px; border: 0; background: #d8d8d8; }
.menu hr.tight { margin: 1px auto 2px; }

.callout { position: absolute; border: 2px solid #f00; }
.callout-menu { left: 4px; top: 15px; width: 38px; height: 16px; }
.callout-item { left: 6px; top: 45px; width: 66px; height: 20px; }
.pointer { position: absolute; left: 66px; top: 24px; width: 32px; height: 32px; }

.stage { position: relative; flex: 1; min-width: 0; background: linear-gradient(#cacae6, #64647c); }
.scene { display: block; width: 100%; height: 100%; }
.caption {
  position: absolute;
  left: 21%;
  bottom: 5px;
  width: 438px;
  height: 37px;
  border: 1px solid #000;
  background: #fff;
  color: #000;
  font-size: 17px;
  line-height: 35px;
  text-align: center;
}

.appearance { flex: none; display: flex; flex-direction: column; width: 109px; margin-left: 2px; border-left: 1px solid #ccc; font-size: 6px; }
.appearance h2 { flex: none; height: 12px; padding-left: 2px; background: #bdbdbd; font-size: 7px; font-weight: 500; line-height: 11px; }
.layers { flex: 1; display: flex; flex-direction: column; justify-content: space-between; margin: 2px 3px 0 0; padding-left: 2px; border-right: 1px solid #999; }
.layers li { display: flex; align-items: center; height: 10px; }
.layers .first { margin-top: 5px; }
.layers svg { flex: none; width: 10px; height: 10px; margin: 0 2px 0 3px; }
.sw { flex: none; width: 8px; height: 7px; }
.brown { background: #4a3f2a; }
.copper { background: #b5a000; }
.paste { background: #828282; }
.silk { background: #e4e4e4; }
.mask { background: #3a5848; }
.clear { background: repeating-conic-gradient(#dcdcdc 0 25%, #fff 0 50%) 0 0 / 6px 6px; }
.stackup { flex: none; display: flex; align-items: center; gap: 2px; height: 10px; margin: 2px 0 1px 3px; }
.stackup input { appearance: none; flex: none; width: 8px; height: 8px; margin: 0; border: 1px solid #777; border-radius: 1px; background: #f8f8f8; }
.presets { flex: none; padding: 5px 4px 4px; border-top: 1px solid #bbb; }
.presets label { display: block; height: 11px; line-height: 9px; }
.presets .combo { height: 13px; margin-bottom: 1px; border-radius: 2px; font-family: "Open Sans", sans-serif; font-size: 7px; }
```
